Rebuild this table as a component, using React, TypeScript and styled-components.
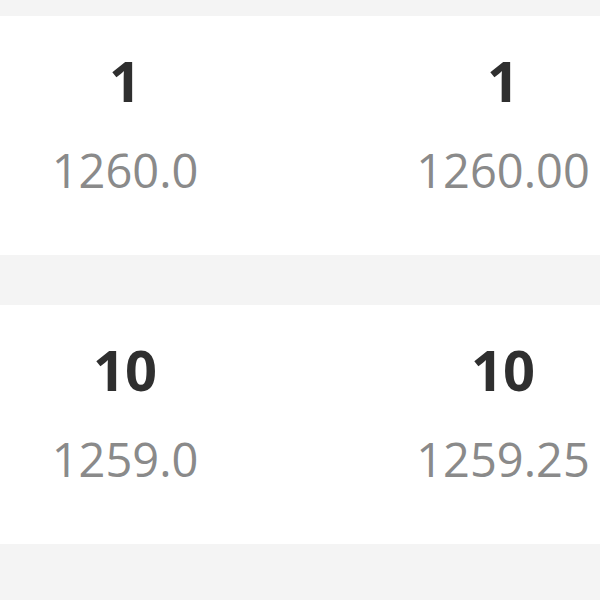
import styled, { createGlobalStyle } from 'styled-components'

interface Level {
  size: string
  left: string
  right: string
}

const levels: Level[] = [
  { size: '1', left: '1260.0', right: '1260.00' },
  { size: '10', left: '1259.0', right: '1259.25' },
]

const GlobalStyle = createGlobalStyle`
  html, body {
    margin: 0;
    padding: 0;
    background: #f4f4f4;
    overflow: hidden;
  }
  body {
    font-family: 'Open Sans', 'Noto Sans', sans-serif;
  }
`

const List = styled.div`
  display: flex;
  flex-direction: column;
  gap: 50px;
  padding-top: 16px;
  width: 628px;
`

const Row = styled.div`
  display: grid;
  grid-template-columns: 250px 250px;
  column-gap: 128px;
  height: 239px;
  box-sizing: border-box;
  padding-top: 36px;
  background: #fff;
`

const Cell = styled.div`
  display: flex;
  flex-direction: column;
  align-items: center;
  gap: 39px;
`

const Size = styled.div`
  font-size: 56px;
  line-height: 56px;
  font-weight: 700;
  color: #2f2f2f;
`

const Price = styled.div`
  font-size: 47px;
  line-height: 47px;
  font-weight: 400;
  color: #8a8a8a;
  white-space: nowrap;
`

export default function App() {
  return (
    <>
      <GlobalStyle />
      <List>
        {levels.map((level) => (
          <Row key={level.size}>
            <Cell>
              <Size>{level.size}</Size>
              <Price>{level.left}</Price>
            </Cell>
            <Cell>
              <Size>{level.size}</Size>
              <Price>{level.right}</Price>
            </Cell>
          </Row>
        ))}
      </List>
    </>
  )
}
